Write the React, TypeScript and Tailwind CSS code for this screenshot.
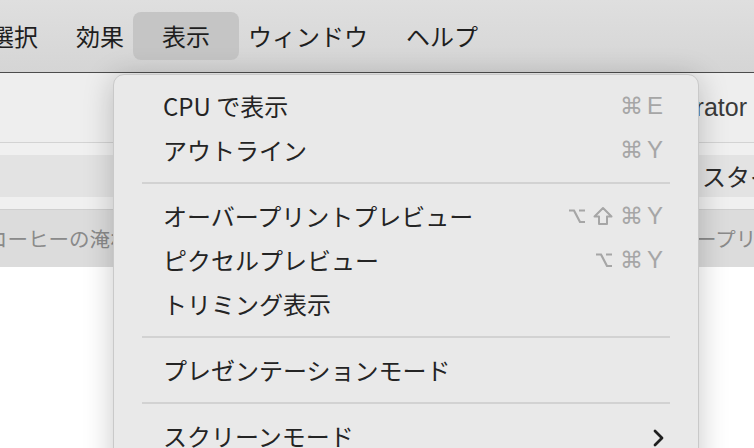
import { Fragment } from "react"

const jp = "font-['Noto_Sans_CJK_JP','Noto_Sans',sans-serif]"

type Item =
  | { kind: "item"; label: string; keys?: string[]; submenu?: boolean }
  | { kind: "sep" }

const items: Item[] = [
  { kind: "item", label: "CPU で表示", keys: ["cmd", "E"] },
  { kind: "item", label: "アウトライン", keys: ["cmd", "Y"] },
  { kind: "sep" },
  { kind: "item", label: "オーバープリントプレビュー", keys: ["opt", "shift", "cmd", "Y"] },
  { kind: "item", label: "ピクセルプレビュー", keys: ["opt", "cmd", "Y"] },
  { kind: "item", label: "トリミング表示" },
  { kind: "sep" },
  { kind: "item", label: "プレゼンテーションモード" },
  { kind: "sep" },
  { kind: "item", label: "スクリーンモード", submenu: true },
]

function MenuBar() {
  const menus = ["選択", "効果", "表示", "ウィンドウ", "ヘルプ"]
  return (
    <div className={`h-[73px] bg-gradient-to-b from-[#dfdfdf] to-[#d5d5d5] border-b border-[#4c4c4c] flex items-center ${jp}`}>
      <div className="flex items-center ml-[-29px] text-[24px] text-[#1e1e1e]">
        {menus.map((m) =>
          m === "表示" ? (
            <div key={m} className="h-[48px] px-[29px] mx-[-10px] rounded-[8px] bg-[#c5c5c5] flex items-center">
              {m}
            </div>
          ) : (
            <div key={m} className="px-[19px] h-[48px] flex items-center">
              {m}
            </div>
          )
        )}
      </div>
    </div>
  )
}

function Window() {
  return (
    <div className={`${jp} overflow-hidden`}>
      {/* toolbar row */}
      <div className="h-[70px] bg-[#eeeeee] border-b border-[#d3d3d3] flex items-center justify-end pr-[7px]">
        <span className="text-[25px] text-[#3a3a3a] whitespace-nowrap font-['Liberation_Sans','Noto_Sans',sans-serif]">Adobe Illustrator</span>
      </div>
      {/* style row */}
      <div className="h-[67px] bg-[#f0f0f0] flex flex-col justify-center border-b border-[#cfcfcf]">
        <div className="h-[42px] bg-[#e3e3e3] flex items-center">
          <div className="w-[702px] shrink-0" />
          <span className="text-[24px] text-[#2a2a2a] whitespace-nowrap">スタイル</span>
        </div>
      </div>
      {/* doc tab row */}
      <div className="h-[57px] bg-[#dcdcdc] flex items-center whitespace-nowrap text-[20.5px] text-[#8a8a8a]">
        <span className="ml-[-13px] w-[709px] shrink-0 overflow-hidden">コーヒーの淹れ方.ai</span>
        <span>ープリント</span>
      </div>
      <div className="h-[300px] bg-white" />
    </div>
  )
}

function KeyGlyph({ k }: { k: string }) {
  if (k === "opt")
    return (
      <svg width="18" height="18" viewBox="0 0 18 18">
        <path d="M1 3.5 H6 L12 15 H17 M11 3.5 H17" fill="none" stroke="#a6a6a6" strokeWidth="2.2" />
      </svg>
    )
  if (k === "shift")
    return (
      <svg width="20" height="20" viewBox="0 0 20 20">
        <path d="M10 2 L18.5 10.5 H14 V18 H6 V10.5 H1.5 Z" fill="none" stroke="#a6a6a6" strokeWidth="2" strokeLinejoin="round" />
      </svg>
    )
  if (k === "cmd")
    return (
      <span className="w-[20px] text-center text-[23px] font-['DejaVu_Sans',sans-serif] leading-none">⌘</span>
    )
  return <span className="text-[24px] font-['Liberation_Sans',sans-serif] leading-none">{k}</span>
}

function Shortcut({ keys }: { keys: string[] }) {
  return (
    <div className="flex items-center gap-[7px] text-[#a6a6a6]">
      {keys.map((k, i) => (
        <KeyGlyph key={i} k={k} />
      ))}
    </div>
  )
}

function ViewMenu() {
  return (
    <div
      className={`absolute left-[113px] top-[74px] w-[586px] h-[420px] rounded-[11px] bg-[#e9e9e9] border border-[#c9c9c9] shadow-[0_4px_30px_rgba(0,0,0,0.22)] pt-[9px] ${jp}`}
    >
      {items.map((it, i) => (
        <Fragment key={i}>
          {it.kind === "sep" ? (
            <div className="h-[22px] flex items-center px-[28px]">
              <div className="h-[2px] w-full bg-[#d2d2d2]" />
            </div>
          ) : (
            <div className="h-[44px] flex items-center justify-between pl-[49px] pr-[35px]">
              <span className="text-[24px] text-[#242424] whitespace-nowrap">{it.label}</span>
              {it.keys && <Shortcut keys={it.keys} />}
              {it.submenu && (
                <svg width="14" height="18" viewBox="0 0 14 18" className="mr-[-3px] mt-[4px]">
                  <polyline points="3,2 10,9 3,16" fill="none" stroke="#1f1f1f" strokeWidth="2.8" strokeLinecap="round" strokeLinejoin="round" />
                </svg>
              )}
            </div>
          )}
        </Fragment>
      ))}
    </div>
  )
}

export default function App() {
  return (
    <div className="relative w-[754px] h-[448px] overflow-hidden bg-white">
      <MenuBar />
      <Window />
      <ViewMenu />
    </div>
  )
}
